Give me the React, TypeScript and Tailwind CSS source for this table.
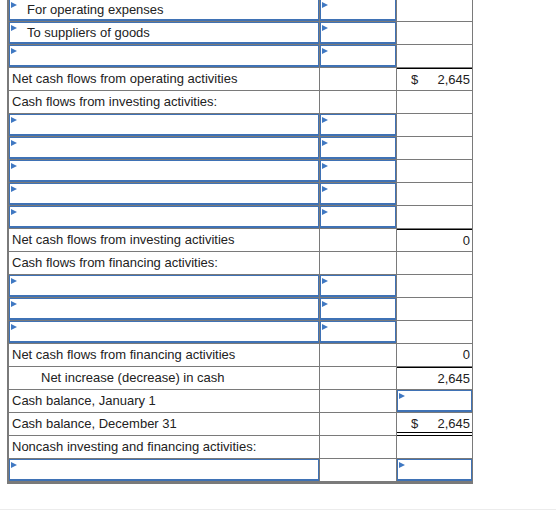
import React from "react";

type Row = {
  label?: string;
  indent?: number;
  labelInput?: boolean;
  midInput?: boolean;
  amount?: string;
  dollar?: boolean;
  amtInput?: boolean;
  total?: boolean;
  double?: boolean;
};

const rows: Row[] = [
  { label: "For operating expenses", indent: 1, labelInput: true, midInput: true },
  { label: "To suppliers of goods", indent: 1, labelInput: true, midInput: true },
  { labelInput: true, midInput: true },
  { label: "Net cash flows from operating activities", amount: "2,645", dollar: true, total: true },
  { label: "Cash flows from investing activities:" },
  { labelInput: true, midInput: true },
  { labelInput: true, midInput: true },
  { labelInput: true, midInput: true },
  { labelInput: true, midInput: true },
  { labelInput: true, midInput: true },
  { label: "Net cash flows from investing activities", amount: "0", total: true },
  { label: "Cash flows from financing activities:" },
  { labelInput: true, midInput: true },
  { labelInput: true, midInput: true },
  { labelInput: true, midInput: true },
  { label: "Net cash flows from financing activities", amount: "0" },
  { label: "Net increase (decrease) in cash", indent: 2, amount: "2,645", total: true },
  { label: "Cash balance, January 1", amtInput: true },
  { label: "Cash balance, December 31", amount: "2,645", dollar: true, double: true },
  { label: "Noncash investing and financing activities:" },
  { labelInput: true, amtInput: true },
];

const Flag = () => (
  <span className="mt-[2px] ml-px block h-0 w-0 shrink-0 border-y-[3px] border-l-[6px] border-y-transparent border-l-[#3f78c2]" />
);

const InputBox = ({ children }: { children?: React.ReactNode }) => (
  <div className="flex h-full w-full items-start border border-b-2 border-[#3f72b5]">
    <Flag />
    {children}
  </div>
);

const Statement = () => {
  return (
    <div className="font-['Liberation_Sans',Arial,sans-serif] text-[13px] text-[#222]">
      <div className="-mt-px ml-[7px] w-[466px] border-b-2 border-l-2 border-r border-[#7a7a7a]">
        {rows.map((r, i) => (
          <div key={i} className="grid h-[23px] grid-cols-[311px_77px_75px]">
            <div className="h-[23px] border-b border-r border-[#7a7a7a]">
              {r.labelInput ? (
                <InputBox>
                  {r.label && (
                    <span className="self-center pl-[10px] leading-none">{r.label}</span>
                  )}
                </InputBox>
              ) : (
                <div
                  className={
                    "flex h-full items-center " +
                    (r.indent === 2 ? "pl-[32px]" : "pl-[3px]")
                  }
                >
                  {r.label}
                </div>
              )}
            </div>
            <div className="h-[23px] border-b border-r border-[#7a7a7a]">
              {r.midInput && <InputBox />}
            </div>
            <div
              className={
                "h-[23px] border-b " +
                (r.double ? "border-black" : "border-[#7a7a7a]") +
                (r.total ? " border-t border-t-black" : "")
              }
            >
              {r.amtInput ? (
                <InputBox />
              ) : (
                <div
                  className={
                    "flex items-center pr-[2px] " +
                    (r.double ? "h-[20px] border-b border-black pt-[2px]" : "h-full")
                  }
                >
                  {r.dollar && <span className="pl-[14px]">$</span>}
                  <span className="ml-auto">{r.amount}</span>
                </div>
              )}
            </div>
          </div>
        ))}
      </div>
      <div className="mt-[25px] h-px bg-[#ececec]" />
    </div>
  );
};

export default function App() {
  return (
    <div className="h-[513px] w-[556px] overflow-hidden bg-white">
      <Statement />
    </div>
  );
}
